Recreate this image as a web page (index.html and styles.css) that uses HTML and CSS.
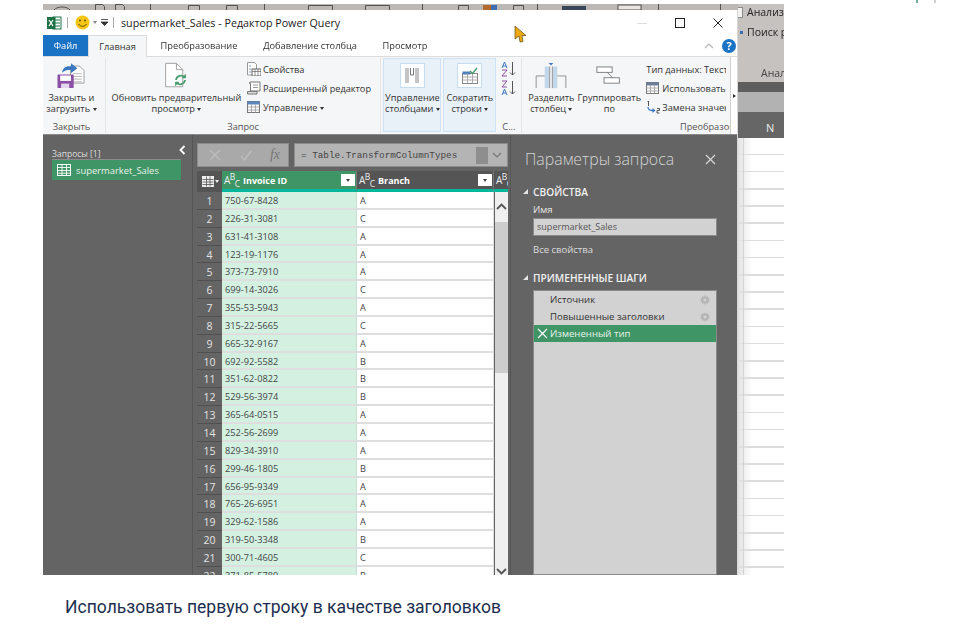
FILE: index.html
```html
<!DOCTYPE html>
<html>
<head>
  <meta charset="utf-8">
  <title>Использовать первую строку в качестве заголовков</title>
  <link rel="stylesheet" href="styles.css">
</head>
<body>
  <div class="page-ticks"><i class="tick-green"></i><i class="tick-grey"></i></div>
  <section class="article">
    <div class="shot">
      <div class="shot-main">
        <svg class="top-band" width="695" height="6" viewBox="0 0 695 6">
          <rect width="695" height="6" fill="#bcb8b5"/>
          <g fill="none" stroke="#55514f">
            <path d="M11 6C14 2 24 2 27 6M52.500 6V.5h7l2 2V6M72.500 6V.5h7l2 2V6M107.500 0V6M145.500 6V1.500h11V6M183.500 6V1.500h11V6M221.500 0V6M265.500 6V1.500h24V6M322.500 6V1.500h24V6M379.500 0V6M415.500 6V1.500h10V6M470.500 6V1.500h10V6M494.500 0V6M615.500 0V6M677.500 0V6"/>
          </g>
          <rect x="440" y="1" width="8" height="5" fill="#b46a2e"/>
          <rect x="448" y="1" width="6" height="5" fill="#3f6fb0"/>
          <rect x="519" y="2" width="24" height="4" fill="#3a4658"/>
          <rect x="575" y="1" width="23" height="5" fill="#e8e6e4" stroke="#55514f"/>
        </svg>
        <div class="window">
          <header class="titlebar">
            <svg class="xl-icon" width="15" height="14" viewBox="0 0 15 14">
              <rect x="6" y="1" width="8" height="12" fill="#fff" stroke="#1e7145"/>
              <path d="M8 4h5M8 7h5M8 10h5" stroke="#1e7145"/>
              <rect x="0" y="1" width="8.500" height="12" fill="#1e7145"/>
              <path d="M2 4l4 6M6 4l-4 6" stroke="#fff" stroke-width="1.300"/>
            </svg>
            <i class="bar-sep"></i>
            <svg class="smiley" width="15" height="15" viewBox="0 0 15 15">
              <circle cx="7.500" cy="7.500" r="7" fill="#f5c518"/>
              <circle cx="5" cy="5.500" r="1" fill="#6b5200"/>
              <circle cx="10" cy="5.500" r="1" fill="#6b5200"/>
              <path d="M3.500 9c1.500 3 6.500 3 8 0" fill="none" stroke="#6b5200"/>
            </svg>
            <i class="caret caret-grey"></i>
            <svg class="qat" width="7" height="7" viewBox="0 0 7 7"><path d="M0 .5h7M0 3h7L3.500 6.500z" fill="#333" stroke="#333" stroke-width=".8"/></svg>
            <i class="bar-sep bar-sep-2"></i>
            <span class="title-text">supermarket_Sales - Редактор Power Query</span>
            <svg class="cursor" width="13" height="18" viewBox="0 0 13 18"><path d="M1 1l11 9.500H8l1 6-3 .5-1-6-4 3z" fill="#eda914" stroke="#5c4a10" stroke-width=".7"/></svg>
            <div class="win-controls">
              <span class="win-min"></span>
              <svg width="10" height="10" viewBox="0 0 10 10"><rect x=".5" y=".5" width="9" height="9" fill="none" stroke="#222"/></svg>
              <svg width="10" height="10" viewBox="0 0 10 10"><path d="M.5.500l9 9M9.500.500l-9 9" stroke="#222" fill="none"/></svg>
            </div>
          </header>

          <nav class="tabs">
            <span class="tab tab-file">Файл</span>
            <span class="tab tab-active">Главная</span>
            <span class="tab tab-p">Преобразование</span>
            <span class="tab tab-a">Добавление столбца</span>
            <span class="tab tab-v">Просмотр</span>
            <svg class="collapse" width="10" height="6" viewBox="0 0 10 6"><path d="M1 5l4-4 4 4" fill="none" stroke="#b5b5b5" stroke-width="1.200"/></svg>
            <span class="help">?</span>
          </nav>

          <div class="ribbon">
            <div class="group group-close">
              <div class="big-btn">
                <svg class="big-icon" width="34" height="30" viewBox="0 0 34 30">
                  <path d="M16.500 4.500h10l5 5v14h-15z" fill="#fff" stroke="#9a9a9a"/>
                  <path d="M19 13h10M19 16h10M19 19h10M19 22h10" stroke="#b0b0b0"/>
                  <path d="M7 12C8 6 12 4 17 5V1.500l7 5.500-7 5.500V9c-4 0-7 0-10 3z" fill="#3c78c2"/>
                  <rect x="2" y="14" width="18" height="15" rx="1" fill="#8c4fa6"/>
                  <rect x="5" y="15" width="12" height="6" fill="#fff"/>
                  <rect x="6" y="24" width="9" height="5" fill="#e6d8ec"/>
                </svg>
                <span class="big-label">Закрыть и<br>загрузить <i class="caret"></i></span>
              </div>
              <span class="group-label">Закрыть</span>
            </div>

            <div class="group group-query">
              <div class="group-body">
                <div class="big-btn btn-refresh">
                  <svg class="big-icon" width="26" height="30" viewBox="0 0 26 30">
                    <path d="M1.500 1.500h12l7 7v19h-19z" fill="#fff" stroke="#9a9a9a"/>
                    <path d="M13.500 1.500v7h7" fill="none" stroke="#9a9a9a"/>
                    <path d="M13 20a5.500 5.500 0 0 1 9.500-3M23 20a5.500 5.500 0 0 1-9.500 3" fill="none" stroke="#4a9c6e" stroke-width="2"/>
                    <path d="M24 13v5h-5zM12 27v-5h5z" fill="#4a9c6e"/>
                  </svg>
                  <span class="big-label">Обновить предварительный<br>просмотр <i class="caret"></i></span>
                </div>
                <div class="small-btns">
                  <div class="small-btn">
                    <svg width="14" height="14" viewBox="0 0 14 14">
                      <path d="M.5.500h7l2 2V13H.5z" fill="#fff" stroke="#999"/>
                      <rect x="5" y="7" width="9" height="7" fill="#fff" stroke="#666"/>
                      <path d="M5 9.500h9M8 7v7M11 7v7" stroke="#666" stroke-width=".7"/>
                      <path d="M2 4h2M2 7h2M2 10h2" stroke="#7a9cc6"/>
                    </svg>
                    <span>Свойства</span>
                  </div>
                  <div class="small-btn">
                    <svg width="14" height="14" viewBox="0 0 14 14">
                      <path d="M3.500 1h9.500v9H3.500z" fill="#fff" stroke="#777"/>
                      <path d="M3.500 1C2 1 2 3 3.500 3M.5 10.500h9.500v2.500H.5z" fill="#ddd" stroke="#777"/>
                      <path d="M6 4h5M6 6.500h5" stroke="#999"/>
                    </svg>
                    <span>Расширенный редактор</span>
                  </div>
                  <div class="small-btn">
                    <svg width="14" height="14" viewBox="0 0 14 14">
                      <rect x=".5" y="1.500" width="12" height="11" fill="#fff" stroke="#777"/>
                      <rect x=".5" y="1.500" width="12" height="3" fill="#5b87c0"/>
                      <path d="M.5 7h12M.5 10h12M4.500 4.500v8M8.500 4.500v8" stroke="#999" stroke-width=".8"/>
                    </svg>
                    <span>Управление <i class="caret"></i></span>
                  </div>
                </div>
              </div>
              <span class="group-label">Запрос</span>
            </div>

            <div class="lit-btn lit-columns">
              <span class="lit-icon">
                <svg width="22" height="22" viewBox="0 0 22 22">
                  <rect x="4" y="3" width="4" height="15" fill="#c4c4c4"/>
                  <rect x="14" y="3" width="4" height="15" fill="#c4c4c4"/>
                  <path d="M9.500 3v7h3V3" fill="none" stroke="#777"/>
                </svg>
              </span>
              <span class="big-label">Управление<br>столбцами <i class="caret"></i></span>
            </div>
            <div class="lit-btn lit-rows">
              <span class="lit-icon">
                <svg width="22" height="22" viewBox="0 0 22 22">
                  <rect x="3.500" y="8.500" width="15" height="10" fill="#fff" stroke="#888"/>
                  <rect x="3.500" y="6.500" width="8" height="3" fill="#4f7fb8"/>
                  <path d="M3.500 12h15M3.500 15h15M8.500 8.500v10M13.500 8.500v10" stroke="#999" stroke-width=".8"/>
                  <path d="M11 6l2.500 2.500L18 3" fill="none" stroke="#4a9c6e" stroke-width="1.400"/>
                </svg>
              </span>
              <span class="big-label">Сократить<br>строки <i class="caret"></i></span>
            </div>

            <div class="group group-sort">
              <div class="sort-icons">
                <svg width="16" height="16" viewBox="0 0 16 16">
                  <path d="M1 7l2.500-6L6 7M2 5h3" fill="none" stroke="#3c78c2"/>
                  <path d="M1 9h5l-5 6h5" fill="none" stroke="#8c4fa6"/>
                  <path d="M11.500 1v13M9 11.500l2.500 2.500 2.500-2.500" fill="none" stroke="#555"/>
                </svg>
                <svg width="16" height="16" viewBox="0 0 16 16">
                  <path d="M1 1h5l-5 6h5" fill="none" stroke="#8c4fa6"/>
                  <path d="M1 15l2.500-6L6 15M2 13h3" fill="none" stroke="#3c78c2"/>
                  <path d="M11.500 1v13M9 11.500l2.500 2.500 2.500-2.500" fill="none" stroke="#555"/>
                </svg>
              </div>
              <span class="group-label">С...</span>
            </div>

            <div class="group group-transform">
              <div class="group-body">
                <div class="big-btn btn-split">
                  <svg class="big-icon" width="36" height="30" viewBox="0 0 36 30">
                    <rect x="11" y="5" width="5" height="24" fill="#c3d7ea"/>
                    <rect x="20" y="5" width="5" height="24" fill="#c3d7ea"/>
                    <path d="M15.500 1h5l-2.500 3z" fill="#3c78c2"/>
                    <path d="M1.500 29V15.500H11M34.500 29V15.500H25M16.500 29V5M19.500 29V5" fill="none" stroke="#8a8a8a"/>
                  </svg>
                  <span class="big-label">Разделить<br>столбец <i class="caret"></i></span>
                </div>
                <div class="big-btn btn-group">
                  <svg class="big-icon" width="28" height="30" viewBox="0 0 28 30">
                    <rect x=".5" y="5.500" width="17" height="6" fill="#fff" stroke="#777"/>
                    <rect x="8.500" y="17.500" width="17" height="6" fill="#fff" stroke="#777"/>
                    <path d="M12 11.500l6 6" stroke="#777"/>
                  </svg>
                  <span class="big-label">Группировать<br>по</span>
                </div>
                <div class="small-btns small-clip">
                  <div class="small-btn"><span>Тип данных: Текст</span></div>
                  <div class="small-btn">
                    <svg width="14" height="14" viewBox="0 0 14 14">
                      <rect x=".5" y="1.500" width="12" height="11" fill="#fff" stroke="#777"/>
                      <rect x=".5" y="1.500" width="12" height="3" fill="#6b7f9a"/>
                      <path d="M.5 7h12M.5 10h12M4.500 4.500v8M8.500 4.500v8" stroke="#999" stroke-width=".8"/>
                    </svg>
                    <span>Использовать</span>
                  </div>
                  <div class="small-btn">
                    <svg width="14" height="14" viewBox="0 0 14 14">
                      <path d="M2.500 1v5M1.500 2l1-1" fill="none" stroke="#444" stroke-width=".9"/>
                      <path d="M2 7c0 3 2 3.500 5 3.500" fill="none" stroke="#3c78c2" stroke-width="1.300"/>
                      <path d="M6.500 8v5l3-2.500z" fill="#3c78c2"/>
                      <path d="M11 8.500h2.500v2H11v2.500h2.500" fill="none" stroke="#444" stroke-width=".9"/>
                    </svg>
                    <span>Замена значений</span>
                  </div>
                </div>
              </div>
              <span class="group-label group-label-end">Преобразование</span>
            </div>
            <div class="ribbon-more"><i></i></div>
          </div>

          <div class="editor">
            <aside class="queries">
              <div class="queries-head">
                <span>Запросы [1]</span>
                <svg width="7" height="10" viewBox="0 0 7 10"><path d="M5.500 1l-4 4 4 4" fill="none" stroke="#fff" stroke-width="1.800"/></svg>
              </div>
              <div class="query-item">
                <svg width="14" height="12" viewBox="0 0 14 12">
                  <rect x=".5" y=".5" width="13" height="11" fill="none" stroke="#fff"/>
                  <path d="M.5 3.500h13M.5 6.500h13M.5 9.200h13M5 .5v11M9.500.5v11" stroke="#fff" stroke-width=".9"/>
                </svg>
                <span>supermarket_Sales</span>
              </div>
            </aside>

            <main class="center">
              <div class="formula-bar">
                <div class="formula-btns">
                  <svg width="14" height="14" viewBox="0 0 14 14"><path d="M2 2l10 10M12 2L2 12" stroke="#bdbdbd" stroke-width="1.300"/></svg>
                  <svg width="14" height="14" viewBox="0 0 14 14"><path d="M2 8l3.500 4L12 3" fill="none" stroke="#bdbdbd" stroke-width="1.300"/></svg>
                  <span class="fx">fx</span>
                </div>
                <div class="formula-input">
                  <span>= Table.TransformColumnTypes</span>
                  <i class="formula-stub"></i>
                  <svg width="10" height="6" viewBox="0 0 10 6"><path d="M1 1l4 4 4-4" fill="none" stroke="#777" stroke-width="1.200"/></svg>
                </div>
              </div>

              <div class="grid">
                <div class="grid-head">
                  <div class="corner">
                    <svg width="12" height="11" viewBox="0 0 12 11">
                      <rect x=".5" y=".5" width="11" height="10" fill="#eee" stroke="#eee"/>
                      <path d="M.5 3.500h11M.5 6h11M.5 8.500h11M4.500.5v10M8 .5v10" stroke="#555" stroke-width=".8"/>
                    </svg>
                    <i class="caret caret-white"></i>
                  </div>
                  <div class="col-head col-invoice">
                    <span class="abc">A<sup>B</sup><sub>C</sub></span>
                    <span class="col-name">Invoice ID</span>
                    <span class="filter"><i class="caret caret-dark"></i></span>
                  </div>
                  <div class="col-head col-branch">
                    <span class="abc">A<sup>B</sup><sub>C</sub></span>
                    <span class="col-name">Branch</span>
                    <span class="filter"><i class="caret caret-dark"></i></span>
                  </div>
                  <div class="col-head col-more"><span class="abc">A<sup>B</sup><sub>C</sub></span></div>
                </div>

                <div class="grid-body">
                  <div class="rows">
                    <div class="row"><span class="num">1</span><span class="cell id">750-67-8428</span><span class="cell">A</span></div>
                    <div class="row"><span class="num">2</span><span class="cell id">226-31-3081</span><span class="cell">C</span></div>
                    <div class="row"><span class="num">3</span><span class="cell id">631-41-3108</span><span class="cell">A</span></div>
                    <div class="row"><span class="num">4</span><span class="cell id">123-19-1176</span><span class="cell">A</span></div>
                    <div class="row"><span class="num">5</span><span class="cell id">373-73-7910</span><span class="cell">A</span></div>
                    <div class="row"><span class="num">6</span><span class="cell id">699-14-3026</span><span class="cell">C</span></div>
                    <div class="row"><span class="num">7</span><span class="cell id">355-53-5943</span><span class="cell">A</span></div>
                    <div class="row"><span class="num">8</span><span class="cell id">315-22-5665</span><span class="cell">C</span></div>
                    <div class="row"><span class="num">9</span><span class="cell id">665-32-9167</span><span class="cell">A</span></div>
                    <div class="row"><span class="num">10</span><span class="cell id">692-92-5582</span><span class="cell">B</span></div>
                    <div class="row"><span class="num">11</span><span class="cell id">351-62-0822</span><span class="cell">B</span></div>
                    <div class="row"><span class="num">12</span><span class="cell id">529-56-3974</span><span class="cell">B</span></div>
                    <div class="row"><span class="num">13</span><span class="cell id">365-64-0515</span><span class="cell">A</span></div>
                    <div class="row"><span class="num">14</span><span class="cell id">252-56-2699</span><span class="cell">A</span></div>
                    <div class="row"><span class="num">15</span><span class="cell id">829-34-3910</span><span class="cell">A</span></div>
                    <div class="row"><span class="num">16</span><span class="cell id">299-46-1805</span><span class="cell">B</span></div>
                    <div class="row"><span class="num">17</span><span class="cell id">656-95-9349</span><span class="cell">A</span></div>
                    <div class="row"><span class="num">18</span><span class="cell id">765-26-6951</span><span class="cell">A</span></div>
                    <div class="row"><span class="num">19</span><span class="cell id">329-62-1586</span><span class="cell">A</span></div>
                    <div class="row"><span class="num">20</span><span class="cell id">319-50-3348</span><span class="cell">B</span></div>
                    <div class="row"><span class="num">21</span><span class="cell id">300-71-4605</span><span class="cell">C</span></div>
                    <div class="row"><span class="num">22</span><span class="cell id">371-85-5789</span><span class="cell">B</span></div>
                  </div>
                  <div class="scrollbar">
                    <svg class="scroll-up" width="11" height="7" viewBox="0 0 11 7"><path d="M1 6l4.500-4.500L10 6" fill="none" stroke="#555" stroke-width="1.800"/></svg>
                    <i class="thumb"></i>
                    <svg class="scroll-down" width="11" height="7" viewBox="0 0 11 7"><path d="M1 1l4.500 4.500L10 1" fill="none" stroke="#555" stroke-width="1.800"/></svg>
                  </div>
                </div>
              </div>
            </main>

            <aside class="settings">
              <div class="settings-head">
                <span>Параметры запроса</span>
                <svg width="11" height="11" viewBox="0 0 11 11"><path d="M1 1l9 9M10 1l-9 9" stroke="#d8d8d8" stroke-width="1.200"/></svg>
              </div>
              <div class="section-title">Свойства</div>
              <div class="field-label">Имя</div>
              <div class="name-input">supermarket_Sales</div>
              <div class="all-props">Все свойства</div>
              <div class="section-title section-steps">Примененные шаги</div>
              <ul class="steps">
                <li>Источник<svg class="gear" width="10" height="10" viewBox="0 0 10 10"><path d="M5 0l1 2 2-1 0 2 2 .8L8.500 5 10 6.200 8 7l0 2-2-1-1 2-1-2-2 1 0-2-2-.8L1.500 5 0 3.800 2 3l0-2 2 1z" fill="#b5b5b5"/><circle cx="5" cy="5" r="1.500" fill="#d2d2d2"/></svg></li>
                <li>Повышенные заголовки<svg class="gear" width="10" height="10" viewBox="0 0 10 10"><path d="M5 0l1 2 2-1 0 2 2 .8L8.500 5 10 6.200 8 7l0 2-2-1-1 2-1-2-2 1 0-2-2-.8L1.500 5 0 3.800 2 3l0-2 2 1z" fill="#b5b5b5"/><circle cx="5" cy="5" r="1.500" fill="#d2d2d2"/></svg></li>
                <li class="step-current"><svg class="step-x" width="11" height="11" viewBox="0 0 11 11"><path d="M1 1l9 9M10 1l-9 9" stroke="#fff" stroke-width="1.200"/></svg>Измененный тип</li>
              </ul>
            </aside>
          </div>
        </div>
      </div>

      <div class="excel-side">
        <div class="side-ribbon">
          <div class="side-line"><i class="side-table"></i>Анализ ,</div>
          <div class="side-line"><i class="side-arrow"></i>Поиск р</div>
          <div class="side-group">Анал</div>
        </div>
        <div class="side-dark"></div>
        <div class="side-formula"></div>
        <div class="side-cols">N</div>
        <div class="side-sheet"></div>
      </div>
    </div>
    <p class="caption">Использовать первую строку в качестве заголовков</p>
  </section>
</body>
</html>
```

FILE: styles.css
```css
* {
  box-sizing: border-box;
}
html, body {
  height: 100%;
}
body {
  margin: 0;
  background: #fff;
  font-family: "Open Sans", "Noto Sans", sans-serif;
  overflow: hidden;
}
.page-ticks {
  height: 4px;
  display: flex;
  gap: 16px;
  padding-left: 916px;
}
.page-ticks i {
  width: 2px;
  height: 3px;
}
.tick-green {
  background: #6fae92;
}
.tick-grey {
  background: #d0d0d0;
}
.article {
  padding-left: 43px;
}
.shot {
  width: 741px;
  height: 571px;
  display: flex;
  overflow: hidden;
  filter: blur(0.35px);
}
.shot-main {
  width: 695px;
  display: flex;
  flex-direction: column;
}
.top-band {
  display: block;
  flex: none;
}
.window {
  flex: 1;
  display: flex;
  flex-direction: column;
  background: #fff;
  min-height: 0;
  border-right: 1px solid #d8d8d8;
}
.caret {
  display: inline-block;
  width: 0;
  height: 0;
  border-left: 2.5px solid transparent;
  border-right: 2.5px solid transparent;
  border-top: 3px solid #333;
  vertical-align: middle;
}
.caret-grey {
  border-top-color: #888;
  margin-left: 3px;
}
.caret-white {
  border-top-color: #eee;
  margin-left: 1px;
}
.caret-dark {
  border-top-color: #444;
}

/* title bar */
.titlebar {
  height: 25px;
  display: flex;
  align-items: center;
  padding-left: 4px;
  position: relative;
  color: #222;
  font-size: 10.7px;
}
.bar-sep {
  width: 1px;
  height: 11px;
  background: #aaa;
  margin: 0 7px 0 5px;
}
.bar-sep-2 {
  margin: 0 7px 0 5px;
}
.qat {
  margin-left: 4px;
}
.title-text {
  white-space: nowrap;
}
.cursor {
  position: absolute;
  left: 471px;
  top: 15px;
}
.win-controls {
  margin-left: auto;
  width: 100px;
  display: flex;
  align-items: center;
  justify-content: space-between;
  padding-right: 14px;
  margin-top: 1px;
}
.win-min {
  width: 10px;
  height: 1px;
  background: #ddd;
}

/* tabs */
.tabs {
  height: 21px;
  display: flex;
  align-items: stretch;
  position: relative;
  font-size: 9.25px;
  color: #333;
}
.tab {
  display: flex;
  align-items: center;
  justify-content: center;
}
.tab-file {
  width: 45px;
  background: #1a72c4;
  color: #fff;
}
.tab-active {
  width: 59px;
  background: #f5f6f7;
  border: 1px solid #dcdcdc;
  border-bottom: 0;
  margin-bottom: -1px;
  z-index: 1;
}
.tab-p {
  width: 104px;
}
.tab-a {
  width: 118px;
}
.tab-v {
  width: 72px;
}
.collapse {
  margin: 8px 0 0 auto;
}
.help {
  width: 14px;
  height: 14px;
  border-radius: 50%;
  background: #1a72c4;
  color: #fff;
  font-weight: 700;
  font-size: 11px;
  line-height: 14px;
  text-align: center;
  margin: 4px 1px 0 8px;
}

/* ribbon */
.ribbon {
  height: 78px;
  flex: none;
  display: flex;
  background: #f5f6f7;
  border-top: 1px solid #dcdcdc;
  font-size: 9.2px;
  color: #333;
  line-height: 11px;
  overflow: hidden;
}
.group {
  display: flex;
  flex-direction: column;
  align-items: center;
  border-right: 1px solid #e4e4e4;
  margin: 1px 0;
}
.group-label {
  margin-top: auto;
  color: #555;
  line-height: 12px;
  white-space: nowrap;
}
.group-label-end {
  align-self: flex-end;
  width: 50px;
  overflow: hidden;
}
.group-body {
  display: flex;
  width: 100%;
}
.group-close {
  width: 63px;
  padding-right: 5px;
}
.group-query {
  width: 276px;
  margin-right: 2px;
}
.big-btn {
  display: flex;
  flex-direction: column;
  align-items: center;
  text-align: center;
  white-space: nowrap;
}
.big-icon {
  display: block;
  height: 27px;
  margin: 4px 0 3px;
}
.big-label {
  display: block;
}
.btn-refresh {
  width: 137px;
  margin: 0 2px;
}
.small-btns {
  display: flex;
  flex-direction: column;
  gap: 5px;
  padding-top: 4px;
}
.small-btn {
  height: 14px;
  display: flex;
  align-items: center;
  gap: 2px;
  white-space: nowrap;
}
.small-btn svg {
  flex: none;
}
.lit-btn {
  flex: none;
  height: 74px;
  margin-top: 1px;
  background: #e9f1f8;
  border: 1px solid #cfe2f3;
  display: flex;
  flex-direction: column;
  align-items: center;
  text-align: center;
  white-space: nowrap;
}
.lit-columns {
  width: 58px;
  margin-right: 2px;
}
.lit-rows {
  width: 53px;
}
.lit-icon {
  width: 25px;
  height: 25px;
  margin: 4px 0;
  background: #fdfeff;
  border: 1px solid #c6dcf0;
  display: flex;
  align-items: center;
  justify-content: center;
}
.group-sort {
  width: 26px;
}
.sort-icons {
  display: flex;
  flex-direction: column;
  gap: 3px;
  padding-top: 3px;
}
.group-transform {
  width: 208px;
  border-right: 0;
  overflow: hidden;
  align-items: flex-start;
  padding-left: 4px;
}
.btn-split {
  width: 50px;
}
.btn-group {
  width: 66px;
  margin-right: 4px;
}
.small-clip {
  width: 80px;
  overflow: hidden;
}
.ribbon-more {
  width: 7px;
  flex: none;
  margin-left: auto;
  border-left: 1px solid #cfcfcf;
  display: flex;
  align-items: center;
  justify-content: center;
  background: #fff;
}
.ribbon-more i {
  width: 0;
  height: 0;
  border-top: 2.5px solid transparent;
  border-bottom: 2.5px solid transparent;
  border-left: 3px solid #333;
}

/* editor */
.editor {
  flex: 1;
  min-height: 0;
  display: flex;
  background: #646464;
  border-top: 1px solid #8a8a8a;
}
.queries {
  width: 150px;
  flex: none;
  padding: 10px 0 0 9px;
  border-right: 1px solid #565656;
}
.queries-head {
  display: flex;
  justify-content: space-between;
  align-items: center;
  width: 134px;
  height: 14px;
  font-size: 8.5px;
  color: #ddd;
}
.queries-head span {
  padding-top: 3px;
}
.queries-head svg {
  margin-top: -4px;
}
.query-item {
  width: 129px;
  height: 21px;
  border-top: 1px solid #8c8c8c;
  background: #3f9565;
  display: flex;
  align-items: center;
  gap: 5px;
  padding-left: 5px;
  color: #e8f3ec;
  font-size: 9.4px;
}
.center {
  width: 317px;
  flex: none;
  padding: 8px 2px 0 4px;
  display: flex;
  flex-direction: column;
  min-height: 0;
}
.formula-bar {
  height: 24px;
  display: flex;
  gap: 5px;
  flex: none;
}
.formula-btns {
  width: 92px;
  background: #a9a9a9;
  border: 1px solid #8c8c8c;
  display: flex;
  align-items: center;
  justify-content: space-between;
  padding: 0 8px 0 10px;
}
.fx {
  font-family: "Liberation Serif", serif;
  font-style: italic;
  font-size: 14px;
  color: #777;
}
.formula-input {
  flex: 1;
  background: #b4b4b4;
  border: 1px solid #8c8c8c;
  display: flex;
  align-items: center;
  padding: 0 5px 0 6px;
  font-family: "Liberation Mono", monospace;
  font-size: 9.3px;
  color: #444;
}
.formula-input span {
  flex: 1;
}
.formula-stub {
  width: 12px;
  height: 17px;
  background: #8e8e8e;
  margin-right: 4px;
}
.grid {
  flex: 1;
  min-height: 0;
  margin-top: 4px;
  display: flex;
  flex-direction: column;
}
.grid-head {
  height: 21px;
  flex: none;
  display: flex;
  background: #555;
  overflow: hidden;
}
.corner {
  width: 25px;
  flex: none;
  display: flex;
  align-items: center;
  padding-left: 5px;
}
.col-head {
  display: flex;
  align-items: center;
  border-bottom: 3px solid #00b69b;
  color: #fff;
  font-size: 9px;
  font-weight: 700;
  padding-left: 1px;
}
.col-invoice {
  width: 135px;
  flex: none;
  background: #3f9565;
  border-right: 1px solid #777;
}
.col-branch {
  width: 137px;
  flex: none;
  border-right: 1px solid #777;
}
.col-more {
  flex: 1 1 0;
  min-width: 0;
  overflow: hidden;
}
.abc {
  font-size: 10px;
  font-weight: 400;
  color: #eee;
  width: 17px;
  margin-right: 3px;
  white-space: nowrap;
  line-height: 1;
  flex: none;
  padding-left: 1px;
  letter-spacing: -0.5px;
}
.abc sup, .abc sub {
  font-size: 8.5px;
  line-height: 0;
}
.col-name {
  flex: 1;
}
.filter {
  width: 14px;
  height: 12px;
  background: #fff;
  margin-right: 1px;
  display: flex;
  align-items: center;
  justify-content: center;
}
.grid-body {
  flex: 1;
  min-height: 0;
  display: flex;
  overflow: hidden;
}
.rows {
  width: 297px;
  flex: none;
}
.row {
  height: 17.85px;
  display: flex;
  font-size: 9.2px;
  line-height: 18px;
  color: #444;
}
.num {
  width: 25px;
  flex: none;
  text-align: center;
  background: #646464;
  border-bottom: 1px solid #505050;
  color: #e4e4e4;
  font-size: 10.5px;
}
.cell {
  width: 137px;
  flex: none;
  padding-left: 3px;
  background: #fff;
  border-bottom: 2px solid #dedede;
  border-right: 1px solid #dedede;
}
.cell.id {
  width: 135px;
  background: #d3f0e1;
  border-right-color: #c5dfd1;
}
.scrollbar {
  flex: 1;
  background: #efefef;
  display: flex;
  flex-direction: column;
  align-items: center;
  margin-left: 1px;
  max-width: 14px;
}
.scroll-up {
  margin-top: 11px;
  flex: none;
}
.thumb {
  width: 100%;
  height: 151px;
  flex: none;
  margin-top: 12px;
  background: #cdcdcd;
}
.scroll-down {
  margin-top: auto;
  flex: none;
}

/* right panel */
.settings {
  flex: 1;
  padding: 12px 20px 0 14px;
  color: #e6e6e6;
  font-size: 9.6px;
  display: flex;
  flex-direction: column;
  min-height: 0;
  border-left: 1px solid #565656;
}
.settings-head {
  display: flex;
  align-items: center;
  justify-content: space-between;
  font-size: 15.9px;
  line-height: 24px;
  color: #d4d4d4;
  font-weight: 300;
  margin-right: 1px;
}
.section-title {
  margin-top: 14px;
  padding-left: 8px;
  position: relative;
  font-weight: 600;
  font-size: 10.2px;
  line-height: 14px;
  text-transform: uppercase;
  color: #f0f0f0;
}
.section-title::before {
  content: "";
  position: absolute;
  left: -2px;
  top: 4px;
  border-left: 5px solid transparent;
  border-bottom: 5px solid #e6e6e6;
}
.field-label {
  margin: 4px 0 0 8px;
  line-height: 13px;
}
.name-input {
  margin: 2px 0 0 8px;
  height: 18px;
  background: #d2d2d2;
  border: 1px solid #8a8a8a;
  color: #555;
  line-height: 16px;
  padding-left: 3px;
  font-size: 9.05px;
}
.all-props {
  margin: 7px 0 0 8px;
  line-height: 14px;
  font-size: 9.5px;
  color: #dedede;
}
.section-steps {
  margin-top: 14px;
}
.steps {
  list-style: none;
  margin: 5px 0 0 8px;
  padding: 0;
  flex: 1;
  background: #d2d2d2;
  border: 1px solid #8a8a8a;
  color: #333;
}
.steps li {
  height: 17px;
  padding-left: 16px;
  display: flex;
  align-items: center;
  line-height: 17px;
}
.gear {
  margin-left: auto;
  margin-right: 6px;
}
.step-current {
  background: #3f9565;
  color: #e8f3ec;
  position: relative;
}
.step-x {
  position: absolute;
  left: 3px;
  top: 3px;
}

/* excel behind */
.excel-side {
  flex: 1;
  display: flex;
  flex-direction: column;
  font-size: 10.5px;
  color: #222;
}
.side-ribbon {
  height: 78px;
  background: #c6c2bf;
  padding-top: 1px;
  display: flex;
  flex-direction: column;
  overflow: hidden;
  white-space: nowrap;
}
.side-line {
  height: 20px;
  line-height: 14px;
  display: flex;
}
.side-table {
  width: 5px;
  height: 11px;
  margin: 2px 4px 0 0;
  background: #f2f2f2;
  border: 1px solid #8c8c8c;
  border-left: 0;
}
.side-arrow {
  width: 3px;
  height: 3px;
  margin: 6px 4px 0 2px;
  background: #3c6fb0;
}
.side-group {
  margin: 21px 0 0 23px;
  color: #444;
}
.side-dark {
  height: 10px;
  background: #5e5e5e;
}
.side-formula {
  height: 20px;
  background: #b2b2b2;
}
.side-cols {
  height: 26px;
  background: #666;
  color: #eee;
  font-size: 11px;
  line-height: 32px;
  padding-left: 28px;
}
.side-sheet {
  flex: 1;
  background:
    linear-gradient(90deg, transparent 5px, #d4d4d4 5px, #d4d4d4 6px, transparent 6px),
    linear-gradient(90deg, #e2e2e2 0, rgba(255, 255, 255, 0) 14px),
    repeating-linear-gradient(#fff 0, #fff 15.6px, #dcdcdc 15.6px, #dcdcdc 17.2px);
}
.caption {
  margin: 22px 0 0 22px;
  font-family: Roboto, sans-serif;
  font-size: 17.55px;
  line-height: 21px;
  color: #1d2f50;
}
```
